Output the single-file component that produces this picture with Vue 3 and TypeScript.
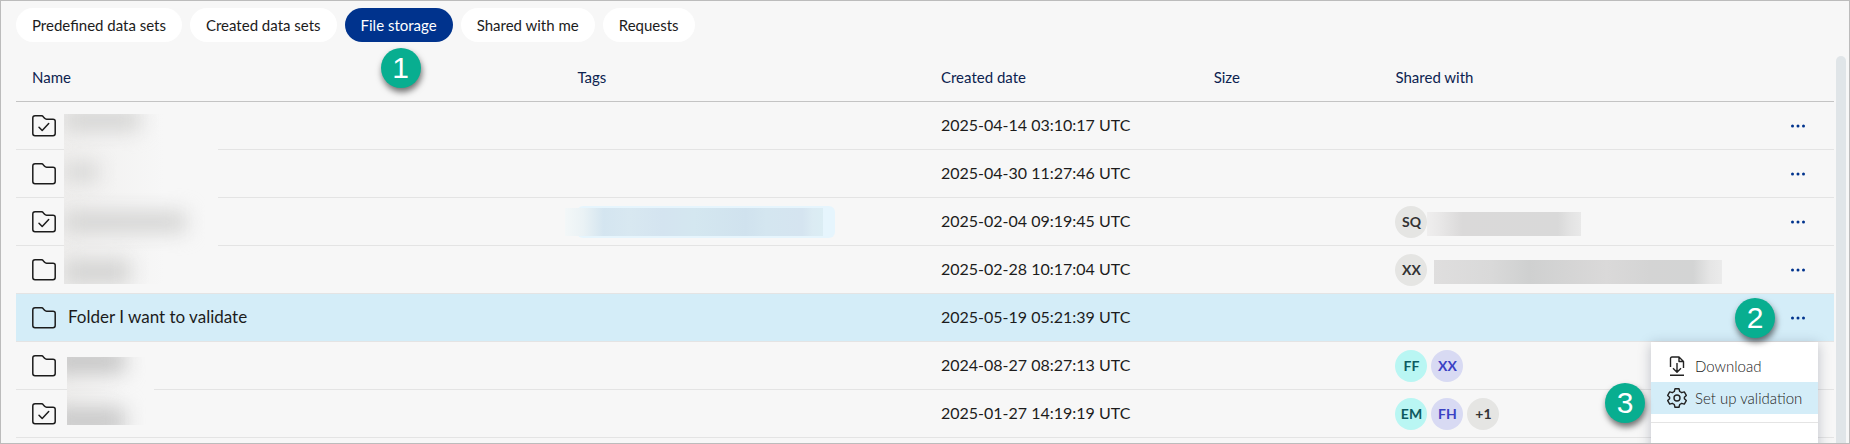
<script setup lang="ts">
import { ref } from 'vue'

interface Person {
  label: string
  tone: 'grey' | 'mint' | 'lilac'
}

interface Entry {
  id: number
  name?: string
  validated: boolean
  created: string
  tag?: boolean
  people: Person[]
  hidden?: 'short' | 'long'
}

const tabs = ['Predefined data sets', 'Created data sets', 'File storage', 'Shared with me', 'Requests']
const activeTab = ref('File storage')
const openId = ref(5)

const entries: Entry[] = [
  { id: 1, validated: true, created: '2025-04-14 03:10:17 UTC', people: [] },
  { id: 2, validated: false, created: '2025-04-30 11:27:46 UTC', people: [] },
  { id: 3, validated: true, created: '2025-02-04 09:19:45 UTC', tag: true, people: [{ label: 'SQ', tone: 'grey' }], hidden: 'short' },
  { id: 4, validated: false, created: '2025-02-28 10:17:04 UTC', people: [{ label: 'XX', tone: 'grey' }], hidden: 'long' },
  { id: 5, name: 'Folder I want to validate', validated: false, created: '2025-05-19 05:21:39 UTC', people: [] },
  { id: 6, validated: false, created: '2024-08-27 08:27:13 UTC', people: [{ label: 'FF', tone: 'mint' }, { label: 'XX', tone: 'lilac' }] },
  { id: 7, validated: true, created: '2025-01-27 14:19:19 UTC', people: [{ label: 'EM', tone: 'mint' }, { label: 'FH', tone: 'lilac' }, { label: '+1', tone: 'grey' }] },
]
</script>

<template>
  <main class="page">
    <nav class="tabs" aria-label="Data sections">
      <div v-for="tab in tabs" :key="tab" class="tab-slot">
        <button type="button" class="tab" :class="{ active: tab === activeTab }" @click="activeTab = tab">{{ tab }}</button>
        <span v-if="tab === 'File storage'" class="marker marker-tab">1</span>
      </div>
    </nav>

    <div class="body">
      <div class="table-area">
        <table class="files">
          <colgroup>
            <col class="col-name" />
            <col class="col-tags" />
            <col class="col-date" />
            <col class="col-size" />
            <col class="col-shared" />
            <col class="col-actions" />
          </colgroup>
          <thead>
            <tr>
              <th scope="col">Name</th>
              <th scope="col">Tags</th>
              <th scope="col">Created date</th>
              <th scope="col">Size</th>
              <th scope="col">Shared with</th>
              <th scope="col" aria-label="Actions"></th>
            </tr>
          </thead>
          <tbody>
            <tr v-for="entry in entries" :key="entry.id" :class="{ selected: entry.id === openId }">
              <td>
                <div class="name">
                  <svg class="folder" viewBox="0 0 24 22" aria-hidden="true">
                    <path d="M.8 3v15.500q0 2.200 2.200 2.200h18q2.200 0 2.200-2.200V6.200q0-2-2.200-2h-6.400q-1.200 0-2-.9l-1.200-1.400Q10.700.8 9.500.8H3Q.8.800.8 3Z" />
                    <path v-if="entry.validated" d="m7 12.200 3.200 3.300 6.500-7" />
                  </svg>
                  <span class="label">{{ entry.name }}</span>
                </div>
              </td>
              <td>
                <div v-if="entry.tag" class="tag"><span class="tag-mask"></span></div>
              </td>
              <td class="date">{{ entry.created }}</td>
              <td></td>
              <td>
                <div class="people">
                  <span v-for="person in entry.people" :key="person.label" class="avatar" :class="person.tone">{{ person.label }}</span>
                  <span v-if="entry.hidden" class="mask" :class="entry.hidden"></span>
                </div>
              </td>
              <td class="actions">
                <button type="button" class="more" aria-label="More actions" @click="openId = entry.id">
                  <svg viewBox="0 0 16 4" aria-hidden="true">
                    <circle cx="2.500" cy="2" r="1.500" /><circle cx="8" cy="2" r="1.500" /><circle cx="13.500" cy="2" r="1.500" />
                  </svg>
                </button>
                <template v-if="entry.id === openId">
                  <span class="marker marker-row">2</span>
                  <div class="menu">
                    <button type="button" class="item">
                      <svg viewBox="0 0 20 20" aria-hidden="true">
                        <path d="M3.500 11V2.500Q3.500 1 5 1h7l4.500 4.500V12M12 1v4.500h4.500M10 7v9M6 12.300l4 4 4-4M3 19.300h14" />
                      </svg>
                      Download
                    </button>
                    <button type="button" class="item current">
                      <svg viewBox="0 0 20 20" aria-hidden="true">
                        <path d="M8 .8h4l.7 2.700 2 1.200 2.600-.8 2 3.500-1.900 1.900v1.400l1.900 1.900-2 3.500-2.600-.8-2 1.200-.7 2.700H8l-.7-2.700-2-1.200-2.600.8-2-3.500 1.900-1.900V9.300L.7 7.400l2-3.500 2.600.8 2-1.200Z" />
                        <circle cx="10" cy="10" r="3" />
                      </svg>
                      Set up validation
                      <span class="marker marker-menu">3</span>
                    </button>
                    <div class="divider"></div>
                  </div>
                </template>
              </td>
            </tr>
          </tbody>
        </table>
        <div class="veil veil-top">
          <span class="smudge s1"></span>
          <span class="smudge s2"></span>
          <span class="smudge s3"></span>
          <span class="smudge s4"></span>
        </div>
        <div class="veil veil-bottom">
          <span class="smudge s5"></span>
          <span class="smudge s6"></span>
        </div>
      </div>
      <div class="scrollbar"></div>
    </div>
  </main>
</template>

<style>
body {
  margin: 0;
}
</style>

<style scoped>
.page {
  box-sizing: border-box;
  display: flex;
  flex-direction: column;
  min-height: 100vh;
  overflow: hidden;
  padding: 7px 3px 0 15px;
  border: 1px solid #bcbcbc;
  background: #f7f7f7;
  color: #1c1c1c;
  font-family: Lato, "Liberation Sans", sans-serif;
  font-size: 16px;
}
button {
  margin: 0;
  border: 0;
  background: none;
  color: inherit;
  font: inherit;
  cursor: pointer;
}
.tabs {
  display: flex;
  gap: 8px;
}
.tab-slot {
  position: relative;
}
.tab {
  height: 34px;
  padding: 0 16px;
  border-radius: 17px;
  background: #fff;
  font-size: 15px;
  line-height: 34px;
  white-space: nowrap;
}
.tab.active {
  background: #00338d;
  color: #fff;
}
.body {
  flex: 1;
  display: flex;
  gap: 2px;
  padding-top: 12px;
}
.table-area {
  position: relative;
  flex: 1;
}
.files {
  width: 100%;
  table-layout: fixed;
  border-collapse: separate;
  border-spacing: 0;
}
.col-name { width: 30%; }
.col-tags { width: 20%; }
.col-date { width: 15%; }
.col-size { width: 10%; }
.col-shared { width: 20%; }
.col-actions { width: 5%; }
th,
td {
  box-sizing: border-box;
  height: 48px;
  padding: 0 16px;
  border-bottom: 1px solid #e4e4e4;
  text-align: left;
  vertical-align: middle;
  white-space: nowrap;
}
th {
  padding-bottom: 2px;
  border-bottom-color: #c4c4c4;
  color: #0c2350;
  font-size: 15px;
  font-weight: 400;
}
.date {
  padding-bottom: 2px;
}
.selected td {
  background: #d4edf8;
}
.name {
  display: flex;
  align-items: center;
  gap: 12px;
}
.label {
  padding-bottom: 2px;
  font-size: 17px;
  line-height: 20px;
}
.folder {
  width: 24px;
  height: 22px;
  fill: none;
  stroke: #1c1c1c;
  stroke-width: 1.5;
  stroke-linejoin: round;
  stroke-linecap: round;
}
.tag {
  position: relative;
  width: 258px;
  height: 32px;
  border-radius: 6px;
  background: #e6f5fd;
}
.tag-mask {
  position: absolute;
  inset: 2px 12px 2px -12px;
  background: linear-gradient(90deg, #f3f7f8, #eaf2f5 7%, #d4e5f0 15%, #d8e8f1 25%, #d4e4f0 38%, #d4e7f0 50%, #d0e2ee 70%, #d4e6f0 78%, #d5e4f0 92%, #dbebf3 96%, #dbedf4);
}
.people {
  display: flex;
  align-items: center;
  gap: 4px;
}
.avatar {
  width: 32px;
  height: 32px;
  border-radius: 50%;
  font-size: 14px;
  font-weight: 700;
  line-height: 32px;
  text-align: center;
}
.grey { background: #e5e5e3; color: #333; }
.mint { background: #b9f6f3; color: #0d5a60; }
.lilac { background: #d8daf3; color: #3a41c4; }
.mask {
  height: 24px;
  margin-top: 4px;
}
.mask.short {
  width: 154px;
  margin-left: -4px;
  background: linear-gradient(90deg, #efeeee, #e9e8e8 8%, #dad9d9 23%, #d9d9d9 85%, #e3e3e3 93%, #e9e9e9);
}
.mask.long {
  width: 288px;
  margin-left: 3px;
  background: linear-gradient(90deg, #dfdede, #d9d9d9 20%, #cfd0d0 33%, #dad9d9 60%, #d4d4d4 75%, #d3d4d4 90%, #e6e6e6 96%, #ebebeb);
}
.actions {
  position: relative;
  padding-right: 28px;
  text-align: right;
}
.more {
  display: inline-flex;
  align-items: center;
  height: 24px;
  padding: 0;
  vertical-align: middle;
}
.more svg {
  width: 16px;
  height: 4px;
  fill: #00338d;
}
.menu {
  position: absolute;
  z-index: 2;
  top: 48px;
  right: 16px;
  box-sizing: border-box;
  width: 167px;
  height: 200px;
  padding-top: 8px;
  background: #fff;
  box-shadow: 0 2px 12px rgba(20, 30, 60, 0.25);
}
.item {
  position: relative;
  display: flex;
  align-items: center;
  gap: 8px;
  width: 100%;
  height: 32px;
  padding: 0 16px;
  color: #222;
  font-size: 15px;
  font-weight: 300;
  white-space: nowrap;
}
.item.current {
  background: #d4edf8;
}
.item svg {
  flex: none;
  width: 20px;
  height: 20px;
  fill: none;
  stroke: #222;
  stroke-width: 1.4;
  stroke-linejoin: round;
}
.divider {
  margin-top: 8px;
  border-top: 1px solid #e4e4e4;
}
.marker {
  position: absolute;
  z-index: 3;
  width: 40px;
  height: 40px;
  border-radius: 50%;
  background: #08ae90;
  box-shadow: 1px 4px 6px rgba(0, 0, 0, 0.55);
  color: #fff;
  font: 30px/40px "Liberation Sans", sans-serif;
  text-align: center;
}
.marker-tab { top: 40px; left: 36px; }
.marker-row { top: 4px; right: 59px; }
.marker-menu { top: 1px; left: -46px; }
.veil {
  position: absolute;
  overflow: hidden;
  background: linear-gradient(90deg, #f0efee, #f7f7f7 65%);
}
.veil-top {
  top: 60px;
  left: 48px;
  width: 154px;
  height: 170px;
}
.veil-bottom {
  top: 303px;
  left: 51px;
  width: 87px;
  height: 68px;
}
.smudge {
  position: absolute;
  left: 0;
  height: 20px;
  background: #d2d2d1;
  filter: blur(10px);
}
.s1 { top: -4px; width: 76px; }
.s2 { top: 50px; width: 34px; height: 16px; }
.s3 { top: 98px; width: 122px; }
.s4 { top: 146px; width: 66px; height: 24px; }
.s5 { top: -8px; left: -16px; width: 74px; height: 24px; background: #c4c4c4; }
.s6 { top: 50px; left: -16px; width: 74px; height: 28px; background: #c9c9c9; }
.scrollbar {
  flex: none;
  width: 10px;
  margin-top: 2px;
  border-radius: 5px 5px 0 0;
  background: #e0e5e8;
}
</style>
